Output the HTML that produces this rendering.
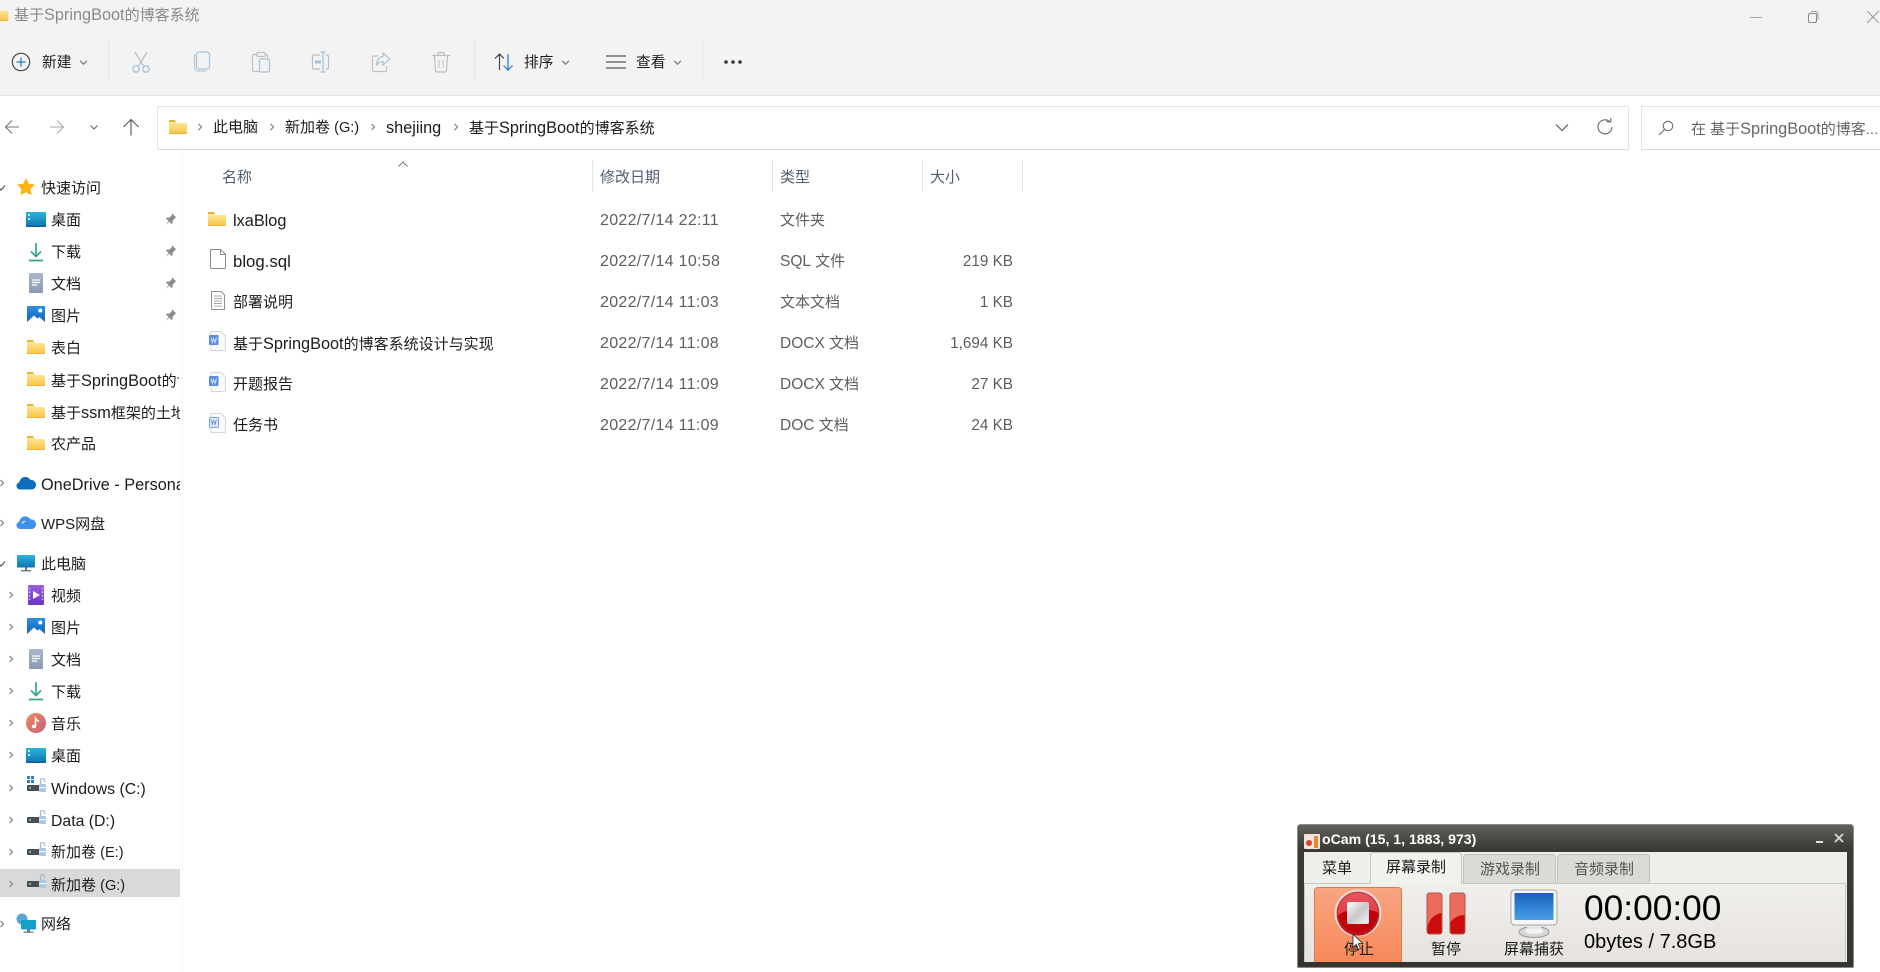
<!DOCTYPE html>
<html lang="zh"><head><meta charset="utf-8"><title>基于SpringBoot的博客系统</title>
<style>
html,body{margin:0;padding:0;background:#fff}
#p{position:relative;width:1880px;height:972px;overflow:hidden;background:#fff;font-family:"Liberation Sans","Noto Sans CJK SC",sans-serif;font-size:15px;color:#1c1c1c;filter:blur(.3px)}
#p div,#p svg{position:absolute}
.t{white-space:nowrap;line-height:20px;height:20px;margin-top:1px}
.r{margin-top:2px}
.t i,i.L{font-style:normal;font-size:16.3px}
.d{color:#5e5e5e;font-size:16px;letter-spacing:.3px}
.z{color:#5e5e5e;font-size:15.3px;letter-spacing:0}
.y{color:#5e5e5e;font-size:15px;letter-spacing:0}
.y i{font-size:15.5px}
.h{color:#4f5f72}
.n{width:128px;overflow:hidden}
.g{color:#666}
.o{line-height:20px;height:20px;white-space:nowrap;color:#1a1a1a;margin-top:1px}
</style></head><body><div id="p">
<svg width="0" height="0" style="left:0;top:0">
<defs>
<linearGradient id="fy" x1="0" y1="0" x2="0" y2="1"><stop offset="0" stop-color="#ffe9a0"/><stop offset="1" stop-color="#f9c544"/></linearGradient>
<linearGradient id="db" x1="0" y1="0" x2="0" y2="1"><stop offset="0" stop-color="#2cb3dc"/><stop offset="1" stop-color="#0e74ae"/></linearGradient>
<linearGradient id="dg" x1="0" y1="0" x2="0" y2="1"><stop offset="0" stop-color="#a9b8cd"/><stop offset="1" stop-color="#8b9ab3"/></linearGradient>
<linearGradient id="pb" x1="0" y1="0" x2="0" y2="1"><stop offset="0" stop-color="#2a8fe0"/><stop offset="1" stop-color="#0f5fb0"/></linearGradient>
<linearGradient id="vp" x1="0" y1="0" x2="0" y2="1"><stop offset="0" stop-color="#9a5ee0"/><stop offset="1" stop-color="#6a36c0"/></linearGradient>
<linearGradient id="mu" x1="0" y1="0" x2="1" y2="1"><stop offset="0" stop-color="#ec8a5a"/><stop offset="1" stop-color="#c8607a"/></linearGradient>
<linearGradient id="red" x1="0" y1="0" x2="0" y2="1"><stop offset="0" stop-color="#e65a60"/><stop offset="1" stop-color="#d8202a"/></linearGradient>
<linearGradient id="scr" x1="0" y1="0" x2="0" y2="1"><stop offset="0" stop-color="#1c5fb8"/><stop offset=".5" stop-color="#2f80d2"/><stop offset="1" stop-color="#4c9fe6"/></linearGradient>
<linearGradient id="sq" x1="0" y1="0" x2="1" y2="1"><stop offset="0" stop-color="#fff"/><stop offset=".5" stop-color="#c8c8c8"/><stop offset="1" stop-color="#f4f4f4"/></linearGradient>
<symbol id="folder" viewBox="0 0 18 14"><path d="M0 1.500h6L8 3h9a1 1 0 0 1 1 1v9a1 1 0 0 1-1 1H1a1 1 0 0 1-1-1z" fill="url(#fy)"/><path d="M0 13h18v.2a.8.8 0 0 1-.8.8H.8a.8.8 0 0 1-.8-.8z" fill="#eeb23a"/><path d="M0 1a1 1 0 0 1 1-1h4.500L7.500 2H0z" fill="#e9b134"/></symbol>
<symbol id="desk" viewBox="0 0 20 15"><rect width="20" height="15" rx="1" fill="url(#db)"/><rect x="2" y="2" width="2" height="2" fill="#bfeafa"/><rect x="2" y="6" width="2" height="2" fill="#bfeafa"/><rect y="13.500" width="20" height="1.500" fill="#0c5f90"/></symbol>
<symbol id="down" viewBox="0 0 14 20"><path d="M7 1v13M2 9.500l5 5 5-5" fill="none" stroke="#31a98f" stroke-width="1.700"/><path d="M0 18.500h14" stroke="#31a98f" stroke-width="1.800"/></symbol>
<symbol id="doc" viewBox="0 0 14 20"><rect width="14" height="20" rx="1" fill="url(#dg)"/><path d="M3 7h8M3 9.500h8M3 12h5" stroke="#fff" stroke-width="1.200"/></symbol>
<symbol id="pic" viewBox="0 0 18 18"><rect width="18" height="18" rx="1" fill="url(#pb)"/><circle cx="13.300" cy="4.500" r="2" fill="#fff"/><path d="M0 16l7-6.500 3.500 3 2-1.500 5.500 5v2H0z" fill="#fff"/></symbol>
<symbol id="pin" viewBox="0 0 14 14"><path d="M8.500.8l4.700 4.700-1.200.5-2.500 3 .2 2-1.200 1-2.200-2.400-4.300 3.600 3.600-4.300L3 6.700l1-1.200 2 .2 3-2.500z" fill="#8d8d8d"/></symbol>
<symbol id="drive" viewBox="0 0 20 20"><rect x="0" y="9" width="18" height="6" rx="1" fill="#4a4d4f"/><rect x="2" y="11" width="2" height="1.600" fill="#7fe090"/><rect x="12" y="8" width="7" height="8" rx="1" fill="#a7c9e6"/><path d="M13.500 8V4.500a2 2 0 0 1 4 0V6" fill="none" stroke="#9dbbd4" stroke-width="1.300"/><rect x="12" y="11" width="7" height="1.200" fill="#fff"/></symbol>
<symbol id="page" viewBox="0 0 16 20"><path d="M.5 1.300a.8.8 0 0 1 .8-.8h9.400l4.800 4.800v13.400a.8.8 0 0 1-.8.8H1.300a.8.8 0 0 1-.8-.8z" fill="#fff" stroke="#8a8a8a"/><path d="M10.500.5v5h5" fill="none" stroke="#8a8a8a"/></symbol>
<symbol id="word" viewBox="0 0 17 20"><path d="M2 .5h10l4.500 4.500v14a.6.6 0 0 1-.6.5H2.600a.6.6 0 0 1-.6-.5z" fill="#fafbfc" stroke="#d3d6da"/><rect x="0" y="4" width="9.500" height="10" rx="1" fill="#5d8ddd"/><path d="M2 6.500l1.300 5 1.400-4 1.400 4 1.300-5" fill="none" stroke="#dce8fa" stroke-width=".9"/></symbol>
<symbol id="word2" viewBox="0 0 17 20"><path d="M2 .5h10l4.500 4.500v14a.6.6 0 0 1-.6.5H2.600a.6.6 0 0 1-.6-.5z" fill="#fafbfc" stroke="#d3d6da"/><rect x=".5" y="4.500" width="9" height="10" rx="1" fill="#e4edfa" stroke="#7ea2dc"/><path d="M2 6.500l1.300 5 1.400-4 1.400 4 1.300-5" fill="none" stroke="#5d8ddd" stroke-width=".9"/></symbol>
<symbol id="chev" viewBox="0 0 8 8"><path d="M2.500 1L5.500 4 2.500 7" fill="none" stroke="#8d8d8d" stroke-width="1.300"/></symbol>
<symbol id="open" viewBox="0 0 8 8"><path d="M1 5l2 2 4-4.500" fill="none" stroke="#555" stroke-width="1.200"/></symbol>
<symbol id="dn" viewBox="0 0 8 6"><path d="M1 1.500l3 3 3-3" fill="none" stroke="#777" stroke-width="1"/></symbol>
</defs></svg>

<!-- Top chrome -->
<div style="left:0;top:0;width:1880px;height:95px;background:#f3f3f3"></div>
<div style="left:0;top:95px;width:1880px;height:1px;background:#e3e3e3"></div>
<svg style="left:-9px;top:8px" width="18" height="13"><use href="#folder"/></svg>
<div class="t" style="left:14px;top:4px;color:#8a8a8a;font-size:15px">基于<i>SpringBoot</i>的博客系统</div>
<svg style="left:1749px;top:12px" width="14" height="10"><path d="M1 5.500h12" stroke="#a8a8a8"/></svg>
<svg style="left:1807px;top:10px" width="14" height="14"><rect x="1.500" y="3.500" width="8" height="9" rx="1.500" fill="none" stroke="#888"/><path d="M4 1.500h4a3 3 0 0 1 3 3v5" fill="none" stroke="#999"/></svg>
<svg style="left:1866px;top:10px" width="14" height="14"><path d="M1 1l12 12M13 1L1 13" stroke="#999"/></svg>

<!-- Toolbar -->
<svg style="left:11px;top:52px" width="20" height="20"><circle cx="10" cy="10" r="8.700" fill="none" stroke="#4a4a4a" stroke-width="1.200"/><path d="M10 5.500v9M5.500 10h9" stroke="#1e78c8" stroke-width="1.200"/></svg>
<div class="t" style="left:42px;top:52px;font-size:14.700px">新建</div>
<svg style="left:79px;top:59px" width="9" height="7"><use href="#dn"/></svg>
<div style="left:108px;top:40px;width:1px;height:40px;background:#e6e6e6"></div>
<svg style="left:131px;top:51px" width="20" height="22"><path d="M4 1l8.500 14M16 1L7.500 15" stroke="#b5b5b5" stroke-width="1.100"/><circle cx="5" cy="18" r="3.200" fill="none" stroke="#a5c3de" stroke-width="1.300"/><circle cx="15" cy="18" r="3.200" fill="none" stroke="#a5c3de" stroke-width="1.300"/></svg>
<svg style="left:192px;top:51px" width="20" height="22"><path d="M2.500 3v14a3 3 0 0 0 3 3h9" fill="none" stroke="#c5c5c5" stroke-width="1.200"/><rect x="4.500" y="1" width="13" height="17" rx="2.500" fill="#f3f3f3" stroke="#a5c3de" stroke-width="1.200"/></svg>
<svg style="left:251px;top:51px" width="20" height="22"><path d="M6 3.500H3a1.500 1.500 0 0 0-1.500 1.500v14A1.500 1.500 0 0 0 3 20.500h5" fill="none" stroke="#c0c0c0" stroke-width="1.200"/><path d="M14 3.500h1.500a1 1 0 0 1 1 1V7" fill="none" stroke="#c0c0c0" stroke-width="1.200"/><rect x="6" y="1.500" width="8" height="4" rx="1" fill="none" stroke="#c0c0c0" stroke-width="1.200"/><rect x="8.500" y="8" width="10" height="13" rx="1.500" fill="#f3f3f3" stroke="#a5c3de" stroke-width="1.200"/></svg>
<svg style="left:311px;top:51px" width="20" height="22"><path d="M9 4H3a1.500 1.500 0 0 0-1.500 1.500v11A1.500 1.500 0 0 0 3 18h6M15 4h1a1.500 1.500 0 0 1 1.500 1.500v11A1.500 1.500 0 0 1 16 18h-1" fill="none" stroke="#bdbdbd" stroke-width="1.200"/><path d="M12 1v20M9.500 1h5M9.500 21h5" stroke="#a5c3de" stroke-width="1.200"/><rect x="4" y="9.500" width="6" height="3" fill="#a5c3de"/></svg>
<svg style="left:371px;top:51px" width="20" height="22"><path d="M7 5H3a1.500 1.500 0 0 0-1.500 1.500V19A1.500 1.500 0 0 0 3 20.500h11a1.500 1.500 0 0 0 1.500-1.500v-4" fill="none" stroke="#c2c2c2" stroke-width="1.200"/><path d="M12 2l7 6-7 6v-3.500c-3 0-5 1-6.500 4 0-5 2.500-8.500 6.500-9z" fill="none" stroke="#a5c3de" stroke-width="1.200"/></svg>
<svg style="left:431px;top:51px" width="20" height="22"><path d="M1 4.500h18M7 4.500V2.500a1 1 0 0 1 1-1h4a1 1 0 0 1 1 1v2M3.500 4.500l1 15a1.500 1.500 0 0 0 1.500 1.500h8a1.500 1.500 0 0 0 1.500-1.500l1-15" fill="none" stroke="#bdbdbd" stroke-width="1.200"/><path d="M8 9v8M12 9v8" stroke="#c8c8c8" stroke-width="1.200"/></svg>
<div style="left:474px;top:40px;width:1px;height:40px;background:#e6e6e6"></div>
<svg style="left:494px;top:52px" width="20" height="20"><path d="M5.500 18V2M1 6.500L5.500 2 10 6.500" fill="none" stroke="#444" stroke-width="1.200"/><path d="M14 2v16M9.500 13.500L14 18l4.500-4.500" fill="none" stroke="#1e78c8" stroke-width="1.200"/></svg>
<div class="t" style="left:524px;top:52px;font-size:14.700px">排序</div>
<svg style="left:561px;top:59px" width="9" height="7"><use href="#dn"/></svg>
<svg style="left:606px;top:54px" width="20" height="16"><path d="M0 2h20M0 8h20M0 14h20" stroke="#555" stroke-width="1.300"/></svg>
<div class="t" style="left:636px;top:52px;font-size:14.700px">查看</div>
<svg style="left:673px;top:59px" width="9" height="7"><use href="#dn"/></svg>
<div style="left:702px;top:40px;width:1px;height:40px;background:#e6e6e6"></div>
<svg style="left:723px;top:59px" width="20" height="6"><circle cx="3" cy="3" r="1.800" fill="#333"/><circle cx="10" cy="3" r="1.800" fill="#333"/><circle cx="17" cy="3" r="1.800" fill="#333"/></svg>

<!-- Nav -->
<svg style="left:4px;top:119px" width="16" height="16"><path d="M15 8H1.500M8 1.500L1.500 8 8 14.500" fill="none" stroke="#777" stroke-width="1.100"/></svg>
<svg style="left:49px;top:119px" width="16" height="16"><path d="M1 8h13.500M8 1.500L14.500 8 8 14.500" fill="none" stroke="#aaa" stroke-width="1.100"/></svg>
<svg style="left:89px;top:124px" width="10" height="7"><path d="M1.500 1.500L5 5l3.500-3.500" fill="none" stroke="#666" stroke-width="1.100"/></svg>
<svg style="left:122px;top:118px" width="18" height="18"><path d="M9 17.500V1.500M1.500 9L9 1.500 16.500 9" fill="none" stroke="#555" stroke-width="1.100"/></svg>

<!-- Address bar -->
<div style="left:157px;top:106px;width:1470px;height:42px;border:1px solid #e3e3e3;border-bottom-color:#dcdcdc;background:#fff"></div>
<svg style="left:169px;top:120px" width="18" height="14"><use href="#folder"/></svg>
<svg style="left:196px;top:123px" width="8" height="8"><use href="#chev"/></svg>
<div class="t" style="left:213px;top:117px;font-size:15px">此电脑</div>
<svg style="left:268px;top:123px" width="8" height="8"><use href="#chev"/></svg>
<div class="t" style="left:285px;top:117px">新加卷 <i style="font-size:14.500px">(G:)</i></div>
<svg style="left:369px;top:123px" width="8" height="8"><use href="#chev"/></svg>
<div class="t" style="left:386px;top:117px"><i>shejiing</i></div>
<svg style="left:452px;top:123px" width="8" height="8"><use href="#chev"/></svg>
<div class="t" style="left:469px;top:117px">基于<i>SpringBoot</i>的博客系统</div>
<svg style="left:1555px;top:123px" width="14" height="9"><path d="M1 1.500L7 7.500l6-6" fill="none" stroke="#555" stroke-width="1.100"/></svg>
<svg style="left:1597px;top:118px" width="16" height="18"><path d="M12.500 3.500A7 7 0 1 0 15 9" fill="none" stroke="#666" stroke-width="1.100"/><path d="M9.500 3.800h4.300V0" fill="none" stroke="#666" stroke-width="1.100"/></svg>
<div style="left:1641px;top:106px;width:260px;height:42px;border:1px solid #e3e3e3;border-bottom-color:#dcdcdc;background:#fff"></div>
<svg style="left:1658px;top:120px" width="16" height="16"><circle cx="10" cy="6" r="4.800" fill="none" stroke="#666" stroke-width="1"/><path d="M6.500 9.500L1 15" stroke="#666" stroke-width="1"/></svg>
<div class="t g" style="left:1691px;top:118px">在 基于<i>SpringBoot</i>的博客...</div>

<!-- Sidebar -->
<div style="left:182px;top:150px;width:1px;height:822px;background:#f6f6f6"></div>
<div style="left:0;top:869px;width:180px;height:28px;background:#d9d9d9"></div>

<svg style="left:-2px;top:183px" width="8" height="8"><use href="#open"/></svg>
<svg style="left:17px;top:178px" width="18" height="18"><path d="M9 0l2.800 5.800 6.200.8-4.500 4.400 1.100 6.300L9 14.300l-5.600 3 1.100-6.300L0 6.600l6.200-.8z" fill="#fbb40f"/></svg>
<div class="t r" style="left:41px;top:177px">快速访问</div>

<svg style="left:26px;top:212px" width="20" height="15"><use href="#desk"/></svg><div class="t r" style="left:51px;top:209px">桌面</div>
<svg style="left:163px;top:212px" width="14" height="14"><use href="#pin"/></svg>
<svg style="left:29px;top:242px" width="14" height="20"><use href="#down"/></svg><div class="t r" style="left:51px;top:241px">下载</div>
<svg style="left:163px;top:244px" width="14" height="14"><use href="#pin"/></svg>
<svg style="left:29px;top:273px" width="14" height="20"><use href="#doc"/></svg><div class="t r" style="left:51px;top:273px">文档</div>
<svg style="left:163px;top:276px" width="14" height="14"><use href="#pin"/></svg>
<svg style="left:27px;top:306px" width="18" height="18"><use href="#pic"/></svg><div class="t r" style="left:51px;top:305px">图片</div>
<svg style="left:163px;top:308px" width="14" height="14"><use href="#pin"/></svg>
<svg style="left:27px;top:340px" width="18" height="14"><use href="#folder"/></svg><div class="t r" style="left:51px;top:337px">表白</div>
<svg style="left:27px;top:372px" width="18" height="14"><use href="#folder"/></svg><div class="t n r" style="left:51px;top:369px">基于<i>SpringBoot</i>的博客系统</div>
<svg style="left:27px;top:404px" width="18" height="14"><use href="#folder"/></svg><div class="t n r" style="left:51px;top:401px;width:129px">基于<i>ssm</i>框架的土地管理</div>
<svg style="left:27px;top:436px" width="18" height="14"><use href="#folder"/></svg><div class="t r" style="left:51px;top:433px">农产品</div>

<svg style="left:-2px;top:479px" width="8" height="8"><use href="#chev"/></svg>
<svg style="left:16px;top:476px" width="20" height="14"><path d="M4 13.500a3.700 3.700 0 0 1-.7-7.300A6 6 0 0 1 14.500 4a4.800 4.800 0 0 1 1.500 9.500z" fill="#0f6cbd"/></svg>
<div class="t r" style="left:41px;top:473px;width:139px;overflow:hidden"><i>OneDrive - Personal</i></div>

<svg style="left:-2px;top:519px" width="8" height="8"><use href="#chev"/></svg>
<svg style="left:16px;top:515px" width="20" height="15"><path d="M4 14a3.700 3.700 0 0 1-.7-7.300A6 6 0 0 1 14.500 4.500 4.800 4.800 0 0 1 16 14z" fill="#3d92ee"/><path d="M5 8a4 4 0 0 1 5-2l-3 3z" fill="#a9d2fb"/></svg>
<div class="t r" style="left:41px;top:513px"><i style="font-size:15px">WPS</i>网盘</div>

<svg style="left:-2px;top:559px" width="8" height="8"><use href="#open"/></svg>
<svg style="left:17px;top:555px" width="18" height="17"><rect x="0" y="0" width="18" height="12.500" rx="1" fill="url(#db)"/><rect x="8" y="12.500" width="2" height="2.500" fill="#6a7a88"/><rect x="4" y="15" width="10" height="1.400" fill="#6a7a88"/></svg>
<div class="t r" style="left:41px;top:553px">此电脑</div>

<svg style="left:7px;top:591px" width="8" height="8"><use href="#chev"/></svg>
<svg style="left:28px;top:585px" width="16" height="20"><rect width="16" height="20" rx="1" fill="url(#vp)"/><path d="M5 6l7 4-7 4z" fill="#fff"/><path d="M1.500 3v14" stroke="#d7c0f8" stroke-width="1.300" stroke-dasharray="1.500 2"/><path d="M14.500 3v14" stroke="#d7c0f8" stroke-width="1.300" stroke-dasharray="1.500 2"/></svg>
<div class="t r" style="left:51px;top:585px">视频</div>
<svg style="left:7px;top:623px" width="8" height="8"><use href="#chev"/></svg>
<svg style="left:27px;top:618px" width="18" height="18"><use href="#pic"/></svg><div class="t r" style="left:51px;top:617px">图片</div>
<svg style="left:7px;top:655px" width="8" height="8"><use href="#chev"/></svg>
<svg style="left:29px;top:649px" width="14" height="20"><use href="#doc"/></svg><div class="t r" style="left:51px;top:649px">文档</div>
<svg style="left:7px;top:687px" width="8" height="8"><use href="#chev"/></svg>
<svg style="left:29px;top:681px" width="14" height="20"><use href="#down"/></svg><div class="t r" style="left:51px;top:681px">下载</div>
<svg style="left:7px;top:719px" width="8" height="8"><use href="#chev"/></svg>
<svg style="left:26px;top:713px" width="20" height="20"><circle cx="10" cy="10" r="10" fill="url(#mu)"/><path d="M9.500 13V5.500c1 1.700 2.500 2 3.500 3" fill="none" stroke="#fff" stroke-width="1.500"/><ellipse cx="8" cy="13.500" rx="2.200" ry="1.800" fill="#fff"/></svg>
<div class="t r" style="left:51px;top:713px">音乐</div>
<svg style="left:7px;top:751px" width="8" height="8"><use href="#chev"/></svg>
<svg style="left:26px;top:748px" width="20" height="15"><use href="#desk"/></svg><div class="t r" style="left:51px;top:745px">桌面</div>

<svg style="left:7px;top:784px" width="8" height="8"><use href="#chev"/></svg>
<svg style="left:27px;top:776px" width="7" height="7"><rect width="3" height="3" fill="#3a78c8"/><rect x="4" width="3" height="3" fill="#3a78c8"/><rect y="4" width="3" height="3" fill="#3a78c8"/><rect x="4" y="4" width="3" height="3" fill="#3a78c8"/></svg>
<svg style="left:27px;top:776px" width="20" height="20"><use href="#drive"/></svg><div class="t r" style="left:51px;top:778px"><i style="font-size:15.800px">Windows (C:)</i></div>
<svg style="left:7px;top:816px" width="8" height="8"><use href="#chev"/></svg>
<svg style="left:27px;top:808px" width="20" height="20"><use href="#drive"/></svg><div class="t r" style="left:51px;top:810px"><i style="font-size:15.800px">Data (D:)</i></div>
<svg style="left:7px;top:848px" width="8" height="8"><use href="#chev"/></svg>
<svg style="left:27px;top:840px" width="20" height="20"><use href="#drive"/></svg><div class="t r" style="left:51px;top:841px">新加卷 <i style="font-size:14.500px">(E:)</i></div>
<svg style="left:7px;top:880px" width="8" height="8"><use href="#chev"/></svg>
<svg style="left:27px;top:872px" width="20" height="20"><use href="#drive"/></svg><div class="t r" style="left:51px;top:874px">新加卷 <i style="font-size:14.500px">(G:)</i></div>

<svg style="left:-2px;top:920px" width="8" height="8"><use href="#chev"/></svg>
<svg style="left:16px;top:913px" width="20" height="21"><circle cx="6" cy="6" r="5.500" fill="#5aa6d8"/><rect x="5" y="7" width="15" height="9.500" rx="1" fill="#14a0c8"/><rect x="11" y="16.500" width="3" height="2" fill="#6a7a88"/><rect x="7.500" y="18.500" width="10" height="1.300" fill="#6a7a88"/></svg>
<div class="t r" style="left:41px;top:913px">网络</div>

<!-- Column headers -->
<div class="t h" style="left:222px;top:167px">名称</div>
<svg style="left:398px;top:161px" width="10" height="6"><path d="M.5 5.500L5 1l4.500 4.500" fill="none" stroke="#777"/></svg>
<div style="left:592px;top:160px;width:1px;height:32px;background:#e6e6e6"></div>
<div class="t h" style="left:600px;top:167px">修改日期</div>
<div style="left:772px;top:160px;width:1px;height:32px;background:#e6e6e6"></div>
<div class="t h" style="left:780px;top:167px">类型</div>
<div style="left:922px;top:160px;width:1px;height:32px;background:#e6e6e6"></div>
<div class="t h" style="left:930px;top:167px">大小</div>
<div style="left:1022px;top:160px;width:1px;height:32px;background:#e6e6e6"></div>

<!-- Files -->
<svg style="left:208px;top:212px" width="18" height="14"><use href="#folder"/></svg>
<div class="t r" style="left:233px;top:209px"><i>lxaBlog</i></div>
<div class="t d r" style="left:600px;top:209px">2022/7/14 22:11</div>
<div class="t y r" style="left:780px;top:209px">文件夹</div>

<svg style="left:210px;top:249px" width="16" height="20"><use href="#page"/></svg>
<div class="t r" style="left:233px;top:250px"><i style="font-size:16.800px">blog.sql</i></div>
<div class="t d r" style="left:600px;top:250px">2022/7/14 10:58</div>
<div class="t y r" style="left:780px;top:250px"><i>SQL</i> 文件</div>
<div class="t z r" style="right:867px;top:250px">219 KB</div>

<svg style="left:211px;top:291px" width="14" height="19"><path d="M.5.500h9.500l3.500 3.500v14.500H.5z" fill="#fff" stroke="#909090"/><path d="M3 5h8M3 7.500h8M3 10h8M3 12.500h8M3 15h8" stroke="#a8a8a8"/></svg>
<div class="t r" style="left:233px;top:291px">部署说明</div>
<div class="t d r" style="left:600px;top:291px">2022/7/14 11:03</div>
<div class="t y r" style="left:780px;top:291px">文本文档</div>
<div class="t z r" style="right:867px;top:291px">1 KB</div>

<svg style="left:209px;top:331px" width="17" height="20"><use href="#word"/></svg>
<div class="t r" style="left:233px;top:332px">基于<i>SpringBoot</i>的博客系统设计与实现</div>
<div class="t d r" style="left:600px;top:332px">2022/7/14 11:08</div>
<div class="t y r" style="left:780px;top:332px"><i>DOCX</i> 文档</div>
<div class="t z r" style="right:867px;top:332px">1,694 KB</div>

<svg style="left:209px;top:372px" width="17" height="20"><use href="#word"/></svg>
<div class="t r" style="left:233px;top:373px">开题报告</div>
<div class="t d r" style="left:600px;top:373px">2022/7/14 11:09</div>
<div class="t y r" style="left:780px;top:373px"><i>DOCX</i> 文档</div>
<div class="t z r" style="right:867px;top:373px">27 KB</div>

<svg style="left:209px;top:413px" width="17" height="20"><use href="#word2"/></svg>
<div class="t r" style="left:233px;top:414px">任务书</div>
<div class="t d r" style="left:600px;top:414px">2022/7/14 11:09</div>
<div class="t y r" style="left:780px;top:414px"><i>DOC</i> 文档</div>
<div class="t z r" style="right:867px;top:414px">24 KB</div>

<!-- oCam -->
<div style="left:1297px;top:824px;width:557px;height:144px;background:linear-gradient(#62615c,#3a3935 18%,#35342f);border-radius:4px 4px 2px 2px;box-shadow:0 0 0 1px #8a8a86 inset"></div>
<div style="left:1304px;top:852px;width:543px;height:110px;background:#f0eeea"></div>
<svg style="left:1304px;top:834px" width="16" height="15"><rect width="16" height="15" rx="1" fill="#f2e6d8"/><circle cx="5" cy="9" r="3" fill="#d8452a"/><rect x="10" y="2" width="4" height="12" fill="#e08a3c"/></svg>
<div style="left:1322px;top:829px;height:20px;line-height:20px;color:#fff;font-weight:bold;font-size:14.100px;white-space:nowrap">oCam (15, 1, 1883, 973)</div>
<div style="left:1816px;top:841px;width:7px;height:2px;background:#e0e0e0"></div>
<svg style="left:1834px;top:833px" width="10" height="10"><path d="M1 1l8 8M9 1L1 9" stroke="#d8d8d8" stroke-width="1.800"/></svg>

<div style="left:1304px;top:883px;width:542px;height:79px;background:linear-gradient(#f1efec,#e6e3de);border:1px solid #c9c7c3;border-bottom:0;box-sizing:border-box"></div>
<div class="o" style="left:1322px;top:858px">菜单</div>
<div style="left:1370px;top:852px;width:92px;height:32px;background:#f3f1ee;border:1px solid #c9c7c3;border-bottom:0;border-radius:4px 4px 0 0;box-sizing:border-box"></div>
<div class="o" style="left:1386px;top:857px">屏幕录制</div>
<div style="left:1463px;top:854px;width:93px;height:29px;background:#dcdad7;border:1px solid #c4c2be;border-bottom:0;border-radius:4px 4px 0 0;box-sizing:border-box"></div>
<div class="o" style="left:1480px;top:859px;color:#555">游戏录制</div>
<div style="left:1557px;top:854px;width:93px;height:29px;background:#dcdad7;border:1px solid #c4c2be;border-bottom:0;border-radius:4px 4px 0 0;box-sizing:border-box"></div>
<div class="o" style="left:1574px;top:859px;color:#555">音频录制</div>

<div style="left:1314px;top:887px;width:88px;height:75px;background:linear-gradient(#f8a581,#f7895a);border:1px solid #dc7a50;border-bottom:0;border-radius:4px 4px 0 0;box-sizing:border-box"></div>
<svg style="left:1334px;top:889px" width="48" height="48"><circle cx="24" cy="24" r="22.500" fill="url(#red)" stroke="#e6dcd8" stroke-width="2"/><path d="M3 27c10-8 30-9 42-3a21 21 0 0 1-42 3z" fill="#c00008"/><circle cx="24" cy="24" r="20.500" fill="none" stroke="#b03a3a" stroke-width=".7"/><rect x="13" y="13" width="22" height="22" rx="2" fill="url(#sq)"/></svg>
<svg style="left:1426px;top:892px" width="40" height="44"><rect x="1" y="1" width="15" height="41" rx="2.500" fill="#ee6a5c" stroke="#a85a50"/><path d="M1.500 35c2-9 8-13 14-14v18.500a2 2 0 0 1-2 2h-10a2 2 0 0 1-2-2z" fill="#cc0c0c"/><rect x="24" y="1" width="15" height="41" rx="2.500" fill="#ee6a5c" stroke="#a85a50"/><path d="M24.500 30c4-5 9-7 14-7v16.500a2 2 0 0 1-2 2h-10a2 2 0 0 1-2-2z" fill="#cc0c0c"/></svg>
<svg style="left:1510px;top:889px" width="48" height="50"><ellipse cx="24" cy="43" rx="15" ry="5.500" fill="#d8d8d8" stroke="#999"/><ellipse cx="24" cy="42" rx="9" ry="3" fill="#f4f4f4"/><rect x="17" y="34" width="14" height="6" fill="#e4e4e4"/><rect x="1" y="1" width="46" height="35" rx="3.500" fill="#f6f6f6" stroke="#a8a8a8"/><rect x="4.500" y="4" width="39" height="27" fill="url(#scr)"/></svg>
<div class="o" style="left:1344px;top:939px">停止</div>
<div class="o" style="left:1431px;top:939px">暂停</div>
<div class="o" style="left:1504px;top:939px">屏幕捕获</div>
<svg style="left:1352px;top:933px" width="13" height="18"><path d="M1 1v13.500l3.300-3 2.200 5 2-1-2.200-4.800 4.500-.2z" fill="#fff" stroke="#333" stroke-width=".9"/></svg>
<div style="left:1584px;top:889px;height:40px;line-height:40px;font-size:35.300px;color:#000;white-space:nowrap">00:00:00</div>
<div style="left:1584px;top:930px;height:24px;line-height:24px;font-size:20px;color:#000;white-space:nowrap">0bytes / 7.8GB</div>
</div></body></html>
